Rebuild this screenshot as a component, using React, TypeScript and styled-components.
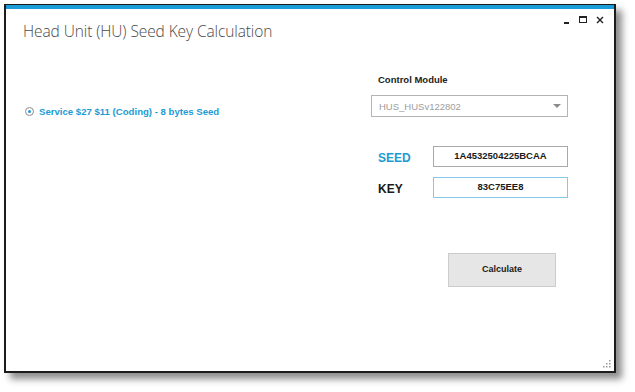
import styled, { createGlobalStyle } from "styled-components";

const Global = createGlobalStyle`
  html, body {
    margin: 0;
    background: #ffffff;
  }
  body {
    font-family: "Liberation Sans", Arial, sans-serif;
  }
`;

const Page = styled.div`
  width: 635px;
  height: 392px;
  padding: 4px 0 0 4px;
  box-sizing: border-box;
`;

const Window = styled.div`
  position: relative;
  width: 612px;
  height: 369px;
  box-sizing: border-box;
  border: 2px solid #1c1c1c;
  border-top-width: 1px;
  background: #ffffff;
  box-shadow: 6px 6px 7px rgba(0, 0, 0, 0.45);
  display: flex;
  flex-direction: column;
`;

const AccentBar = styled.div`
  height: 4px;
  background: #1c9cd8;
`;

const TitleBar = styled.div`
  display: flex;
  justify-content: space-between;
  align-items: flex-start;
  padding: 0 10px 0 17px;
`;

const Title = styled.h1`
  margin: 12px 0 0;
  font-family: "Open Sans", "Noto Sans", sans-serif;
  font-weight: 300;
  font-size: 15.5px;
  line-height: 20px;
  color: #4a4a4a;
  letter-spacing: -0.1px;
`;

const Controls = styled.div`
  display: flex;
  gap: 9px;
  align-items: center;
  margin-top: 5px;
  height: 12px;
`;

const Ctl = styled.span`
  width: 8px;
  height: 8px;
  display: flex;
  align-items: center;
  justify-content: center;
`;

const Body = styled.div`
  display: grid;
  grid-template-columns: 1fr 197px;
  padding: 0 46px 0 19px;
  flex: 1;
`;

const LeftCol = styled.div`
  padding-top: 65px;
`;

const RadioRow = styled.label`
  display: flex;
  align-items: center;
  gap: 5px;
  font-size: 9.6px;
  font-weight: 700;
  color: #1d9bd5;
`;

const Radio = styled.span`
  width: 7px;
  height: 7px;
  border-radius: 50%;
  border: 1px solid #8a8a8a;
  display: flex;
  align-items: center;
  justify-content: center;
  &::after {
    content: "";
    width: 3px;
    height: 3px;
    border-radius: 50%;
    background: #1d9bd5;
  }
`;

const RightCol = styled.div`
  display: flex;
  flex-direction: column;
  padding-top: 33px;
`;

const FieldLabel = styled.div`
  font-size: 9.5px;
  font-weight: 700;
  color: #222;
  padding-left: 7px;
  line-height: 12px;
`;

const Select = styled.div`
  margin-top: 9px;
  height: 22px;
  box-sizing: border-box;
  border: 1px solid #b4b4b4;
  display: flex;
  align-items: center;
  justify-content: space-between;
  padding: 0 6px 0 7px;
  font-size: 9.5px;
  color: #9d9d9d;
`;

const Caret = styled.span`
  width: 0;
  height: 0;
  border-left: 4px solid transparent;
  border-right: 4px solid transparent;
  border-top: 4px solid #8c8c8c;
`;

const Pair = styled.div<{ $top: number }>`
  display: flex;
  align-items: center;
  justify-content: space-between;
  margin-top: ${(p) => p.$top}px;
  padding-left: 7px;
`;

const PairLabel = styled.span<{ $color: string }>`
  font-size: 12px;
  font-weight: 700;
  color: ${(p) => p.$color};
  padding-top: 2px;
`;

const Field = styled.div<{ $active?: boolean }>`
  width: 135px;
  height: 21px;
  box-sizing: border-box;
  border: 1px solid ${(p) => (p.$active ? "#86c8e8" : "#a9a9a9")};
  display: flex;
  align-items: center;
  justify-content: center;
  font-size: 9.5px;
  font-weight: 700;
  color: #1a1a1a;
  padding-bottom: 2px;
`;

const Button = styled.button`
  margin: 55px 0 0 77px;
  width: 108px;
  height: 34px;
  background: #e6e6e6;
  border: 1px solid #cccccc;
  font-family: "Liberation Sans", Arial, sans-serif;
  font-size: 9px;
  font-weight: 700;
  color: #1a1a1a;
  padding: 0 0 2px;
`;

const Grip = styled.svg`
  position: absolute;
  right: 3px;
  bottom: 3px;
`;

export default function App() {
  return (
    <Page>
      <Global />
      <Window>
        <AccentBar />
        <TitleBar>
          <Title>Head Unit (HU) Seed Key Calculation</Title>
          <Controls>
            <Ctl>
              <svg width="7" height="8" viewBox="0 0 7 8">
                <rect x="1" y="6" width="5" height="2" fill="#222" />
              </svg>
            </Ctl>
            <Ctl>
              <svg width="8" height="8" viewBox="0 0 8 8">
                <rect x="0.5" y="0.5" width="7" height="6" fill="none" stroke="#222" />
                <rect x="0.5" y="0.5" width="7" height="1.5" fill="#222" />
              </svg>
            </Ctl>
            <Ctl>
              <svg width="8" height="8" viewBox="0 0 8 8">
                <path d="M1 1 L7 7 M7 1 L1 7" stroke="#222" strokeWidth="1.4" />
              </svg>
            </Ctl>
          </Controls>
        </TitleBar>
        <Body>
          <LeftCol>
            <RadioRow>
              <Radio />
              Service $27 $11 (Coding) - 8 bytes Seed
            </RadioRow>
          </LeftCol>
          <RightCol>
            <FieldLabel>Control Module</FieldLabel>
            <Select>
              HUS_HUSv122802
              <Caret />
            </Select>
            <Pair $top={29}>
              <PairLabel $color="#1d9bd5">SEED</PairLabel>
              <Field>1A4532504225BCAA</Field>
            </Pair>
            <Pair $top={10}>
              <PairLabel $color="#1a1a1a">KEY</PairLabel>
              <Field $active>83C75EE8</Field>
            </Pair>
            <Button>Calculate</Button>
          </RightCol>
        </Body>
        <Grip width="8" height="8" viewBox="0 0 8 8">
          <g fill="#9a9a9a">
            <rect x="6" y="0" width="1.5" height="1.5" />
            <rect x="3" y="3" width="1.5" height="1.5" />
            <rect x="6" y="3" width="1.5" height="1.5" />
            <rect x="0" y="6" width="1.5" height="1.5" />
            <rect x="3" y="6" width="1.5" height="1.5" />
            <rect x="6" y="6" width="1.5" height="1.5" />
          </g>
        </Grip>
      </Window>
    </Page>
  );
}
